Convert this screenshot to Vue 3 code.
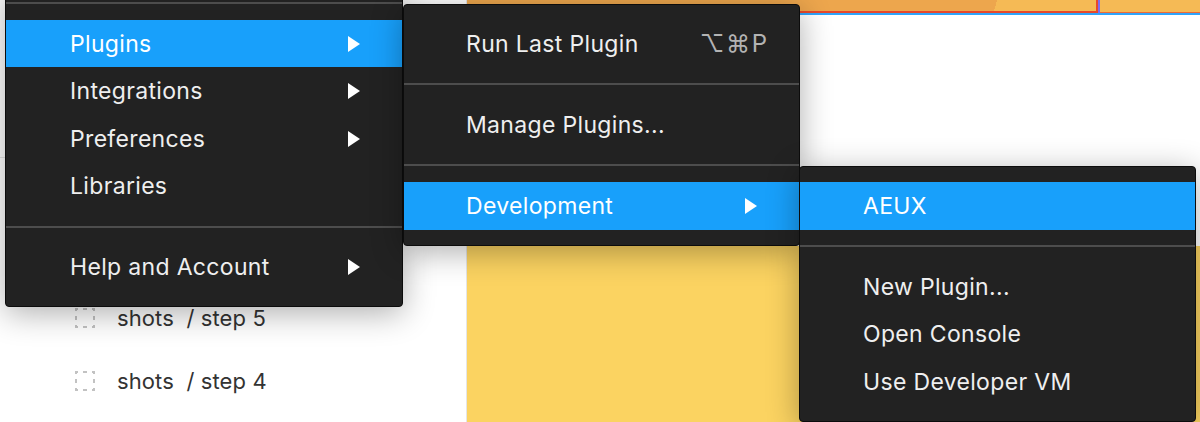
<script setup>
const main = [
  { sep: true },
  { label: 'Plugins', arrow: true, active: true },
  { label: 'Integrations', arrow: true },
  { label: 'Preferences', arrow: true },
  { label: 'Libraries' },
  { sep: true },
  { label: 'Help and Account', arrow: true },
]
const plugins = [
  { label: 'Run Last Plugin', shortcut: '⌥⌘P' },
  { sep: true },
  { label: 'Manage Plugins...' },
  { sep: true },
  { label: 'Development', arrow: true, active: true },
]
const dev = [
  { label: 'AEUX', active: true },
  { sep: true },
  { label: 'New Plugin...' },
  { label: 'Open Console' },
  { label: 'Use Developer VM' },
]
const menus = [
  { cls: 'menu-main', items: main },
  { cls: 'menu-plugins', items: plugins },
  { cls: 'menu-dev', items: dev },
]
const layers = ['step 5', 'step 4']
</script>

<template>
  <div class="page">
    <aside class="panel">
      <div class="panel-top"></div>
      <ul class="layers">
        <li v-for="l in layers" :key="l" class="layer">
          <svg class="frame-icon" width="20" height="20" viewBox="0 0 20 20">
            <path d="M0 1H3M8 1H12M17 1H20M1 0V3M1 8V12M1 17V20M0 19H3M8 19H12M17 19H20M19 0V3M19 8V12M19 17V20" fill="none" stroke="#c2c2c2" stroke-width="2" />
          </svg>
          <span class="layer-name">shots&nbsp; / {{ l }}</span>
        </li>
      </ul>
    </aside>
    <main class="canvas">
      <div class="strip">
        <div class="strip-a"></div>
        <div class="strip-divider"></div>
        <div class="strip-c"></div>
      </div>
      <div class="frame-white"></div>
      <div class="frame-yellow"></div>
    </main>
    <div v-for="m in menus" :key="m.cls" class="menu" :class="m.cls">
      <template v-for="(it, i) in m.items" :key="i">
        <div v-if="it.sep" class="sep"></div>
        <div v-else class="row" :class="{ active: it.active }">
          <span class="label">{{ it.label }}</span>
          <span v-if="it.shortcut" class="shortcut">{{ it.shortcut }}</span>
          <svg v-if="it.arrow" class="arrow" width="12" height="16" viewBox="0 0 12 16">
            <polygon points="0,0 12,8 0,16" fill="#fff" />
          </svg>
        </div>
      </template>
    </div>
  </div>
</template>

<style>
html, body { margin: 0; background: #fff; overflow: hidden; }
</style>

<style scoped>
.page {
  position: relative;
  width: 1200px;
  height: 422px;
  overflow: hidden;
  display: flex;
  font-family: Inter, "Liberation Sans", sans-serif;
  background: #fff;
}
.panel {
  width: 466px;
  flex: none;
  border-right: 1px solid #e5e5e5;
  background: #fff;
}
.panel-top {
  height: 157px;
  border-bottom: 1px solid #e5e5e5;
}
.layers {
  list-style: none;
  margin: 0;
  padding: 128px 0 0 75px;
}
.layer {
  height: 63px;
  display: flex;
  align-items: center;
  gap: 22px;
}
.frame-icon {
  flex: none;
}
.layer-name {
  font-size: 22px;
  letter-spacing: 0.1px;
  color: #333;
  white-space: nowrap;
}
.canvas {
  flex: 1;
  display: flex;
  flex-direction: column;
}
.strip {
  height: 15px;
  flex: none;
  display: flex;
  border-bottom: 2px solid #2fa4fb;
  box-sizing: border-box;
}
.strip-a {
  width: 629px;
  background:
    linear-gradient(transparent 0 11px, #e8492b 11px),
    linear-gradient(105deg, #eda64d 83.8%, #f5ba55 83.8%);
}
.strip-divider {
  width: 4px;
  background: linear-gradient(90deg, #e8492b 50%, #7d6cf0 50%);
}
.strip-c {
  flex: 1;
  background: linear-gradient(#f5ba55 0 12px, #ee6a38 12px);
}
.frame-white {
  height: 231px;
  background: #fff;
}
.frame-yellow {
  flex: 1;
  background: #fbd361;
}
.menu {
  position: absolute;
  box-sizing: border-box;
  padding: 15px 0;
  background: #222;
  border: 1px solid #0c0c0c;
  border-radius: 4px;
  box-shadow: 0 6px 32px rgba(0, 0, 0, 0.32);
  color: #efefef;
  font-size: 23px;
}
.menu-main {
  left: 5px;
  top: -14px;
  width: 398px;
  z-index: 1;
}
.menu-plugins {
  left: 403px;
  top: 4px;
  width: 397px;
  z-index: 2;
}
.menu-dev {
  left: 799px;
  top: 166px;
  width: 397px;
  z-index: 3;
}
.sep {
  height: 2px;
  margin: 15.75px 0;
  background: #4d4d4d;
}
.menu-main .sep:first-child {
  margin-top: 0;
}
.row {
  height: 47.5px;
  display: flex;
  align-items: center;
  justify-content: space-between;
  padding: 0 30px 0 64px;
  white-space: nowrap;
}
.menu-plugins .row {
  padding-left: 62px;
}
.menu-dev .row {
  padding-left: 63px;
}
.row.active {
  background: #18a0fb;
  color: #fff;
}
.label {
  letter-spacing: 0.33px;
}
.arrow {
  flex: none;
  margin-right: 12px;
}
.shortcut {
  color: #b3b3b3;
  font-family: Inter, "DejaVu Sans", sans-serif;
  font-size: 24px;
  letter-spacing: 1.8px;
}
</style>
